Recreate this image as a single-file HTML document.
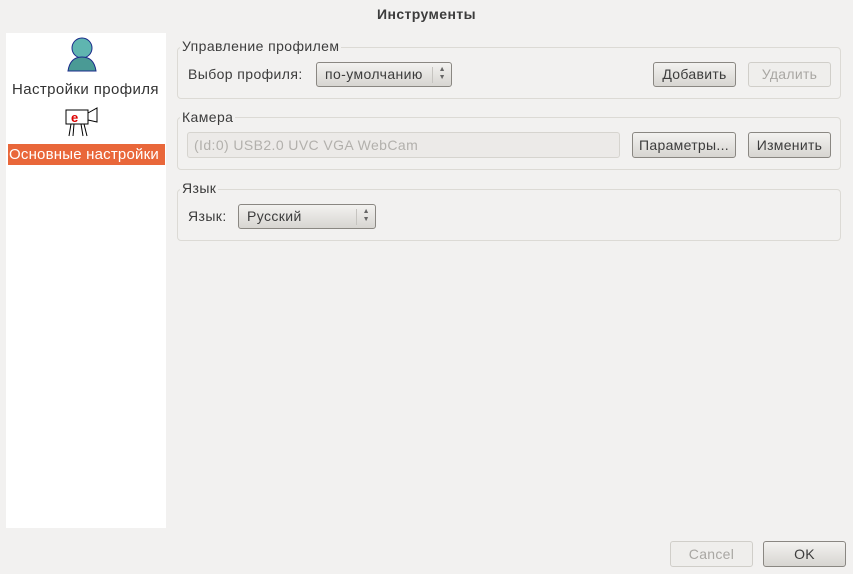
<!DOCTYPE html><html><head><meta charset="utf-8"><style>
body{margin:0;width:853px;height:574px;background:#f2f1f0;font-family:"Liberation Sans","DejaVu Sans",sans-serif;font-size:14px;letter-spacing:0.4px;color:#3c3c3c;position:relative;overflow:hidden}
.a{position:absolute}
.title{left:0;width:853px;top:6px;text-align:center;font-weight:bold;font-size:14px;color:#3c3c3c}
.left{left:6px;top:33px;width:160px;height:495px;background:#fff}
.grp{border:1px solid #dcdad5;border-radius:4px;left:177px;width:662px}
.lbl{background:#f2f1f0;padding:0 2px;font-size:14px}
.btn{border:1px solid #8a8782;border-radius:3px;background:linear-gradient(#f3f2f0,#d7d5d1);text-align:center;box-sizing:border-box;line-height:23px;font-size:14px;color:#3c3c3c;letter-spacing:0.3px}
.dis{border-color:#d0cec9;background:#efeeec;color:#a9a7a3}
.combo{border:1px solid #8a8782;border-radius:3px;background:linear-gradient(#f3f2f0,#d7d5d1);box-sizing:border-box;line-height:23px;padding-left:8px}
.sep{position:absolute;right:18px;top:4px;height:16px;border-left:1px solid #c6c4c0}
.arr{position:absolute;right:5px;top:3px;font-size:7px;line-height:8px;color:#666}
</style></head><body>
<div class="a title">Инструменты</div>
<div class="a left">
 <svg class="a" style="left:61px;top:4px" width="30" height="36" viewBox="0 0 30 36"><circle cx="15" cy="11" r="10" fill="#5fb5b0" stroke="#1a2a8a"/><path d="M1 34 Q3 20 15 20 Q27 20 29 34Z" fill="#4a9a95" stroke="#1a2a8a"/></svg>
 <div class="a" style="left:6px;top:48px;font-size:15px;color:#333">Настройки профиля</div>
 <svg class="a" style="left:59px;top:74px" width="34" height="30" viewBox="0 0 34 30"><rect x="1" y="3" width="22" height="14" fill="#fff" stroke="#000"/><path d="M23 6 L32 1 L32 15 L23 13Z" fill="#fff" stroke="#000"/><text x="6" y="15" font-size="13" font-weight="bold" fill="#d00" font-family="Liberation Sans">e</text><path d="M6 17 L4 29 M9 17 L8 29 M16 17 L18 29 M19 17 L22 29" stroke="#000"/></svg>
 <div class="a" style="left:2px;top:111px;width:156px;height:21px;background:#e9673a;color:#fff;font-size:15px;line-height:21px;padding-left:1px;letter-spacing:0.2px">Основные настройки</div>
</div>
<div class="a grp" style="top:47px;height:50px"></div>
<div class="a lbl" style="left:180px;top:38px">Управление профилем</div>
<div class="a" style="left:188px;top:66px">Выбор профиля:</div>
<div class="a combo" style="left:316px;top:62px;width:136px;height:25px">по-умолчанию<span class="sep"></span><span class="arr">▲<br>▼</span></div>
<div class="a btn" style="left:653px;top:62px;width:83px;height:25px">Добавить</div>
<div class="a btn dis" style="left:748px;top:62px;width:83px;height:25px">Удалить</div>
<div class="a grp" style="top:117px;height:51px"></div>
<div class="a lbl" style="left:180px;top:109px">Камера</div>
<div class="a" style="left:187px;top:132px;width:433px;height:26px;border:1px solid #d6d4cf;border-radius:3px;background:#eceae8;box-sizing:border-box;color:#b2b0ac;line-height:24px;padding-left:6px">(Id:0) USB2.0 UVC VGA WebCam</div>
<div class="a btn" style="left:632px;top:132px;width:104px;height:26px;line-height:24px">Параметры...</div>
<div class="a btn" style="left:748px;top:132px;width:83px;height:26px;line-height:24px">Изменить</div>
<div class="a grp" style="top:189px;height:50px"></div>
<div class="a lbl" style="left:180px;top:180px">Язык</div>
<div class="a" style="left:188px;top:208px">Язык:</div>
<div class="a combo" style="left:238px;top:204px;width:138px;height:25px">Русский<span class="sep"></span><span class="arr">▲<br>▼</span></div>
<div class="a btn dis" style="left:670px;top:541px;width:83px;height:26px;line-height:24px">Cancel</div>
<div class="a btn" style="left:763px;top:541px;width:83px;height:26px;line-height:24px">OK</div>
</body></html>
